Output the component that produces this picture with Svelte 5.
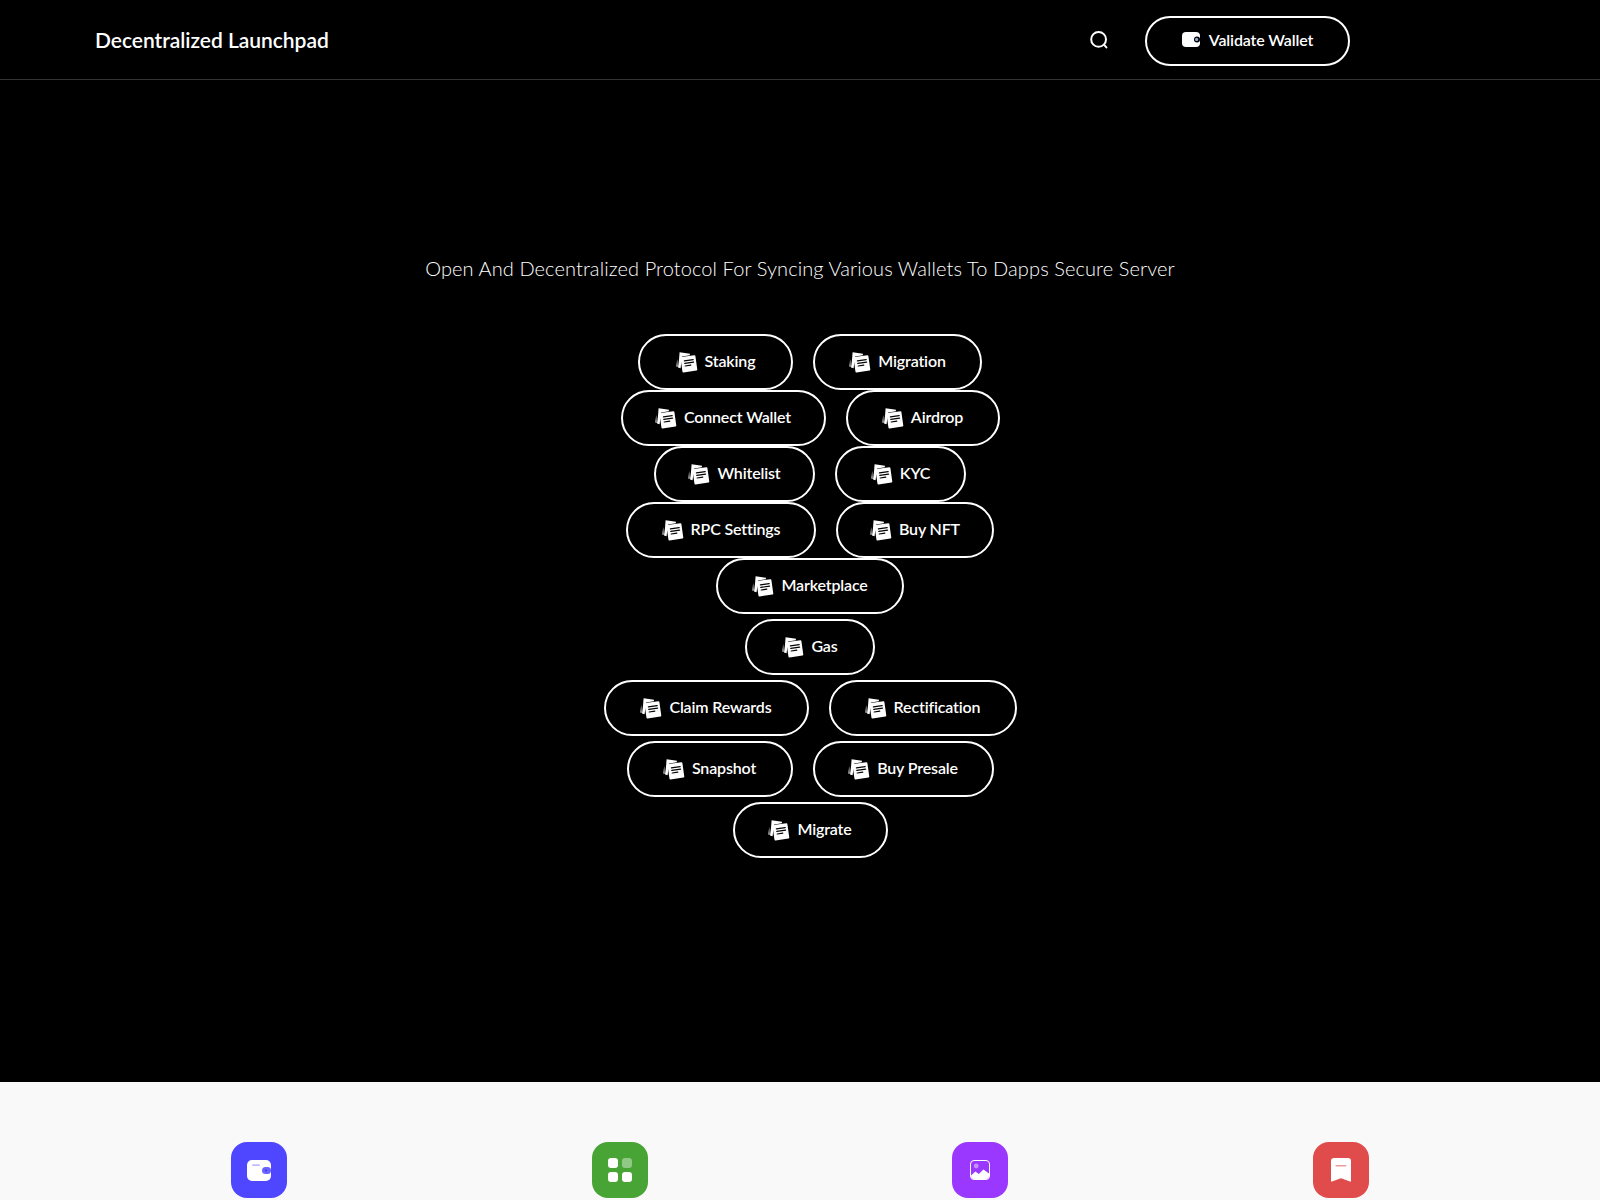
<script>
  const topRows = [
    [{ label: 'Staking', width: 155 }, { label: 'Migration', width: 169 }],
    [{ label: 'Connect Wallet', width: 205 }, { label: 'Airdrop', width: 154 }],
    [{ label: 'Whitelist', width: 161 }, { label: 'KYC', width: 131 }],
    [{ label: 'RPC Settings', width: 190 }, { label: 'Buy NFT', width: 158 }],
    [{ label: 'Marketplace', width: 188 }]
  ];
  const bottomRows = [
    [{ label: 'Gas', width: 130 }],
    [{ label: 'Claim Rewards', width: 205 }, { label: 'Rectification', width: 188 }],
    [{ label: 'Snapshot', width: 166 }, { label: 'Buy Presale', width: 181 }],
    [{ label: 'Migrate', width: 155 }]
  ];
</script>

{#snippet noteIcon()}
  <svg class="note" viewBox="0 0 22 22" aria-hidden="true">
    <path d="M3.6 1.2 14 2.8l-.2 1.4-7.8 1.2L4.6 17.2l-2.6-.6 1-7.6Z" fill="#fff" />
    <path d="M1.2 7.8 0.4 15.6l1.2.4Z" fill="#fff" />
    <rect x="5.4" y="5" width="15" height="15.6" rx="1" fill="#fff" transform="rotate(-8 12.9 12.8)" />
    <g stroke="#000" stroke-width="1.2" stroke-linecap="round">
      <path d="M8.4 9.8 17.2 8.6" />
      <path d="M8.8 12.4 17.6 11.2" />
      <path d="M9.2 15 14.8 14.2" />
    </g>
  </svg>
{/snippet}

{#snippet pill(item)}
  <button class="pill" style="width: {item.width}px">
    {@render noteIcon()}
    <span>{item.label}</span>
  </button>
{/snippet}

<header class="topbar">
  <div class="brand">Decentralized Launchpad</div>
  <div class="actions">
    <svg class="search" viewBox="0 0 20 20" aria-hidden="true">
      <circle cx="9.6" cy="9.4" r="7.4" fill="none" stroke="#fff" stroke-width="2" />
      <path d="M15.4 15.2 17.4 17.4" stroke="#fff" stroke-width="2" stroke-linecap="round" />
    </svg>
    <button class="validate">
      <svg class="wallet" viewBox="0 0 18 15" aria-hidden="true">
        <rect width="18" height="15" rx="4" fill="#fff" />
        <rect x="12" y="4.4" width="6" height="6" rx="3" fill="#000" />
        <circle cx="14.6" cy="7.4" r="1.6" fill="#8fa9d8" />
      </svg>
      <span>Validate Wallet</span>
    </button>
  </div>
</header>

<main class="hero">
  <p class="tagline">Open And Decentralized Protocol For Syncing Various Wallets To Dapps Secure Server</p>
  <div class="group">
    {#each topRows as row}
      <div class="row">
        {#each row as item}
          {@render pill(item)}
        {/each}
      </div>
    {/each}
  </div>
  <div class="group spaced">
    {#each bottomRows as row}
      <div class="row">
        {#each row as item}
          {@render pill(item)}
        {/each}
      </div>
    {/each}
  </div>
</main>

<section class="features">
  <div class="tile blue">
    <svg viewBox="0 0 24 21" width="24" height="21" aria-hidden="true">
      <rect width="24" height="21" rx="5" fill="#fff" />
      <rect x="5" y="4.4" width="8" height="1.4" rx=".7" fill="#a9a2ff" />
      <rect x="15" y="7" width="9" height="7" rx="3.5" fill="#6a63ff" />
      <circle cx="19" cy="10.4" r="1" fill="#3e36e8" />
    </svg>
  </div>
  <div class="tile green">
    <svg viewBox="0 0 24 24" width="24" height="24" aria-hidden="true">
      <rect width="10" height="10" rx="3" fill="#fff" />
      <rect x="14" width="10" height="10" rx="3" fill="#fff" opacity=".4" />
      <rect y="14" width="10" height="10" rx="3" fill="#fff" />
      <rect x="14" y="14" width="10" height="10" rx="3" fill="#fff" />
    </svg>
  </div>
  <div class="tile purple">
    <svg viewBox="0 0 20 20" width="20" height="20" aria-hidden="true">
      <rect x=".5" y=".5" width="19" height="19" rx="3.5" fill="none" stroke="#fff" />
      <circle cx="6.2" cy="6" r="2.4" fill="#fff" opacity=".45" />
      <path d="M1 15.6 5.4 11.4 8.8 14 13.4 9.6 19 13.4V16a3 3 0 0 1-3 3H4a3 3 0 0 1-3-3Z" fill="#fff" />
    </svg>
  </div>
  <div class="tile red">
    <svg viewBox="0 0 20 24" width="20" height="24" aria-hidden="true">
      <path d="M0 3a3 3 0 0 1 3-3h14a3 3 0 0 1 3 3v20.4l-1 .2-9-3.4-9 3.4-1-.2Z" fill="#fff" />
      <rect x="4.4" y="7" width="11" height="1.6" rx=".8" fill="#f09a9a" />
    </svg>
  </div>
</section>

<style>
  :global(body) {
    background: #000;
    font-family: 'Lato', 'Open Sans', sans-serif;
    overflow: hidden;
  }
  .topbar {
    height: 79px;
    border-bottom: 1px solid #333;
    display: flex;
    align-items: center;
    justify-content: space-between;
    padding: 0 250px 0 95px;
  }
  .brand {
    color: #fff;
    font-size: 21px;
    font-weight: 600;
    letter-spacing: -0.03px;
  }
  .actions {
    display: flex;
    align-items: center;
    gap: 36px;
  }
  .search {
    width: 20px;
    height: 20px;
  }
  .validate {
    width: 205px;
    height: 50px;
    margin-top: 2px;
    background: none;
    border: 2px solid #fff;
    border-radius: 25px;
    color: #fff;
    font: 600 16px 'Lato', sans-serif;
    letter-spacing: -0.15px;
    display: flex;
    align-items: center;
    justify-content: center;
    gap: 9px;
  }
  .validate span {
    padding-bottom: 2px;
  }
  .wallet {
    width: 18px;
    height: 15px;
    margin-top: -3px;
  }
  .hero {
    height: 1002px;
    background: #000;
    box-sizing: border-box;
    padding-top: 171px;
  }
  .tagline {
    margin: 0 0 49px;
    color: #fff;
    font-size: 20px;
    font-weight: 300;
    letter-spacing: 0.1px;
    line-height: 34px;
    text-align: center;
  }
  .group {
    display: flex;
    flex-direction: column;
    padding-left: 20px;
  }
  .spaced {
    gap: 5px;
    margin-top: 5px;
  }
  .row {
    display: flex;
    justify-content: center;
    gap: 20px;
  }
  .pill {
    height: 56px;
    padding: 0;
    background: #000;
    border: 2px solid #fff;
    border-radius: 28px;
    color: #fff;
    font: 600 16px 'Lato', sans-serif;
    letter-spacing: -0.15px;
    white-space: nowrap;
    display: flex;
    align-items: center;
    justify-content: center;
    gap: 7px;
  }
  .pill span {
    padding-bottom: 3px;
  }
  .note {
    width: 22px;
    height: 22px;
    flex: none;
  }
  .features {
    height: 118px;
    background: #f9f9f9;
    box-sizing: border-box;
    padding: 60px 0 0;
    display: grid;
    grid-template-columns: repeat(4, 360.67px);
    justify-content: center;
    justify-items: center;
    overflow: hidden;
  }
  .tile {
    width: 56px;
    height: 56px;
    border-radius: 16px;
    display: flex;
    align-items: center;
    justify-content: center;
  }
  .blue { background: #4f46ff; }
  .green { background: #48a435; }
  .purple { background: #9a38ff; }
  .red { background: #e04b4b; }
</style>
